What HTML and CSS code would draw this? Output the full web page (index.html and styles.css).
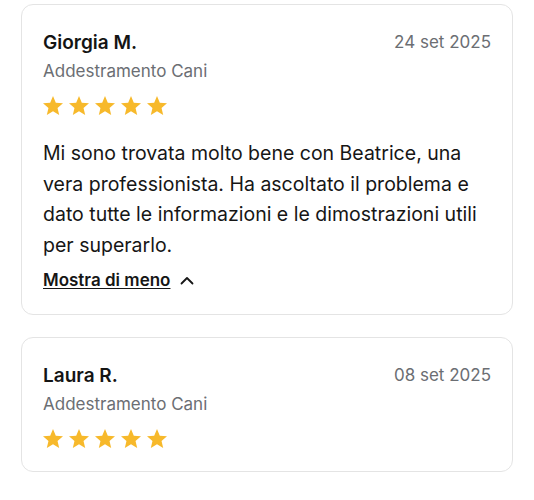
FILE: index.html
```html
<!DOCTYPE html>
<html lang="it">
<head>
<meta charset="utf-8">
<link rel="stylesheet" href="styles.css">
</head>
<body>
<div class="list">
  <div class="card">
    <div class="head">
      <div class="name">Giorgia M.</div>
      <div class="date">24 set 2025</div>
    </div>
    <div class="service">Addestramento Cani</div>
    <div class="stars">
      <svg viewBox="2 2 20 19"><path d="M12 17.27L18.18 21l-1.64-7.03L22 9.24l-7.19-.61L12 2 9.19 8.63 2 9.24l5.46 4.73L5.82 21z"/></svg>
      <svg viewBox="2 2 20 19"><path d="M12 17.27L18.18 21l-1.64-7.03L22 9.24l-7.19-.61L12 2 9.19 8.63 2 9.24l5.46 4.73L5.82 21z"/></svg>
      <svg viewBox="2 2 20 19"><path d="M12 17.27L18.18 21l-1.64-7.03L22 9.24l-7.19-.61L12 2 9.19 8.63 2 9.24l5.46 4.73L5.82 21z"/></svg>
      <svg viewBox="2 2 20 19"><path d="M12 17.27L18.18 21l-1.64-7.03L22 9.24l-7.19-.61L12 2 9.19 8.63 2 9.24l5.46 4.73L5.82 21z"/></svg>
      <svg viewBox="2 2 20 19"><path d="M12 17.27L18.18 21l-1.64-7.03L22 9.24l-7.19-.61L12 2 9.19 8.63 2 9.24l5.46 4.73L5.82 21z"/></svg>
    </div>
    <p class="text">Mi sono trovata molto bene con Beatrice, una vera professionista. Ha ascoltato il problema e dato tutte le informazioni e le dimostrazioni utili per superarlo.</p>
    <a class="toggle" href="#"><span class="toggle-label">Mostra di meno</span><svg class="chev" viewBox="0 0 14 9"><path d="M1.5 7.5L7 2l5.5 5.5"/></svg></a>
  </div>
  <div class="card">
    <div class="head">
      <div class="name">Laura R.</div>
      <div class="date">08 set 2025</div>
    </div>
    <div class="service">Addestramento Cani</div>
    <div class="stars">
      <svg viewBox="2 2 20 19"><path d="M12 17.27L18.18 21l-1.64-7.03L22 9.24l-7.19-.61L12 2 9.19 8.63 2 9.24l5.46 4.73L5.82 21z"/></svg>
      <svg viewBox="2 2 20 19"><path d="M12 17.27L18.18 21l-1.64-7.03L22 9.24l-7.19-.61L12 2 9.19 8.63 2 9.24l5.46 4.73L5.82 21z"/></svg>
      <svg viewBox="2 2 20 19"><path d="M12 17.27L18.18 21l-1.64-7.03L22 9.24l-7.19-.61L12 2 9.19 8.63 2 9.24l5.46 4.73L5.82 21z"/></svg>
      <svg viewBox="2 2 20 19"><path d="M12 17.27L18.18 21l-1.64-7.03L22 9.24l-7.19-.61L12 2 9.19 8.63 2 9.24l5.46 4.73L5.82 21z"/></svg>
      <svg viewBox="2 2 20 19"><path d="M12 17.27L18.18 21l-1.64-7.03L22 9.24l-7.19-.61L12 2 9.19 8.63 2 9.24l5.46 4.73L5.82 21z"/></svg>
    </div>
  </div>
</div>
</body>
</html>
```
FILE: styles.css
```css
html, body {
  margin: 0;
  padding: 0;
  background: #ffffff;
}
body {
  font-family: Inter, "Noto Sans", Arial, sans-serif;
  color: #161616;
}
.list {
  display: flex;
  flex-direction: column;
  gap: 22px;
  padding: 4px 21px 0 21px;
}
.card {
  border: 1px solid #e4e4e4;
  border-radius: 12px;
  padding: 26px 21px 23px 21px;
  background: #fff;
}
.head {
  display: flex;
  justify-content: space-between;
  align-items: flex-start;
}
.name {
  font-size: 19px;
  font-weight: 600;
  line-height: 24px;
  color: #141414;
}
.date {
  font-size: 17px;
  line-height: 22px;
  color: #6b6e73;
}
.service {
  margin-top: 5px;
  font-size: 17px;
  line-height: 22px;
  color: #6b6e73;
}
.stars {
  display: flex;
  gap: 6px;
  margin-top: 14px;
  height: 19px;
}
.stars svg {
  width: 20px;
  height: 19px;
  fill: #f7b92b;
}
.text {
  margin: 23px 0 0 0;
  font-size: 19.5px;
  line-height: 30.5px;
  color: #161616;
}
.toggle {
  display: flex;
  align-items: center;
  gap: 10px;
  margin-top: 9px;
  color: #161616;
  text-decoration: none;
  font-size: 17px;
  line-height: 22px;
  font-weight: 600;
}
.toggle-label {
  text-decoration: underline;
  text-underline-offset: 2px;
}
.chev {
  width: 14px;
  height: 9px;
  fill: none;
  stroke: #161616;
  stroke-width: 1.8;
  stroke-linecap: round;
  stroke-linejoin: round;
}
```
